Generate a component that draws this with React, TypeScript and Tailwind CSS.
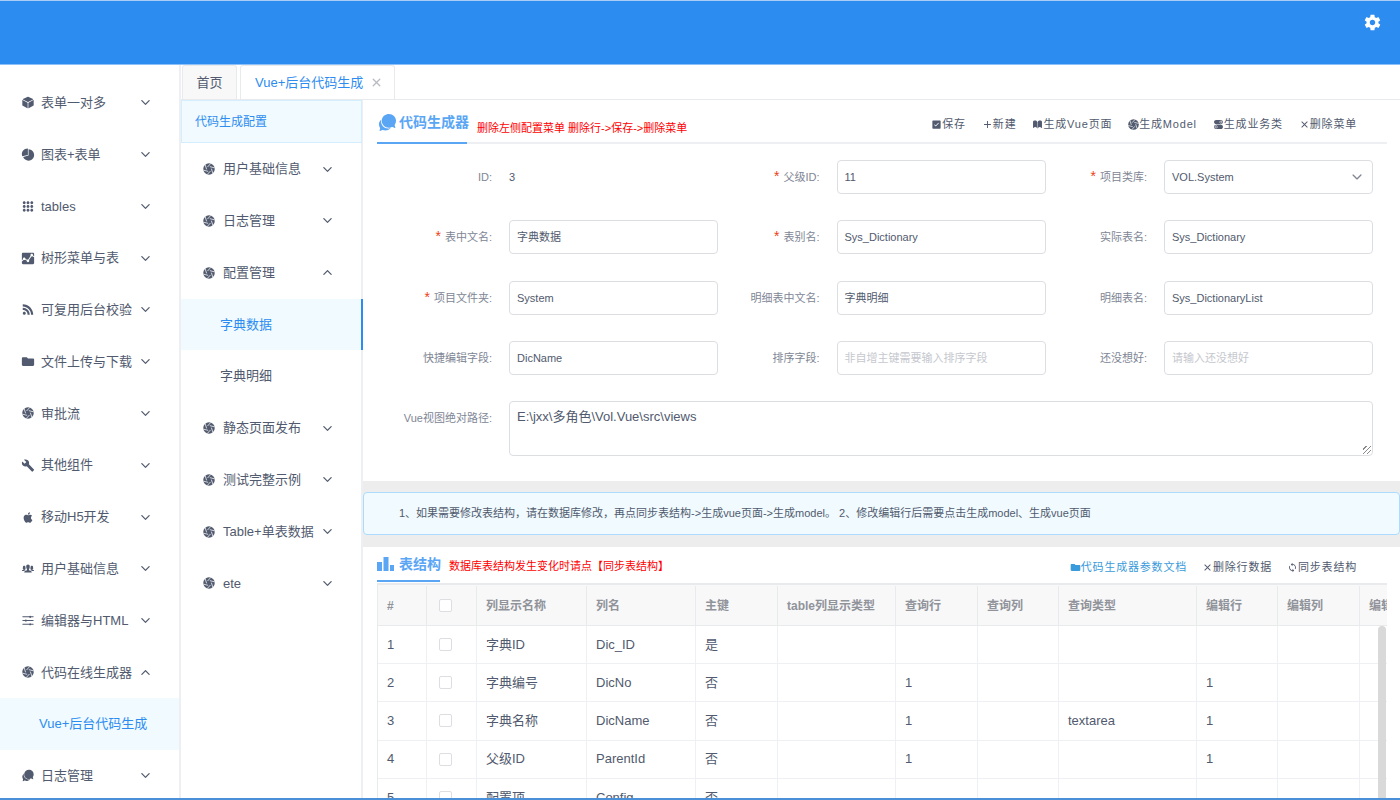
import React from "react";
import {
  IoIosCube, IoIosPie, IoIosKeypad, IoMdAnalytics, IoLogoRss, IoMdFolder, IoMdBuild, IoLogoApple,
  IoIosPeople, IoIosOptions, IoIosChatbubbles, IoIosArrowDown, IoIosArrowUp, IoMdSettings, IoIosCheckbox, IoMdAdd,
  IoIosBook, IoMdClose, IoIosClose, IoMdSync, IoIosSwitch,
} from "react-icons/io";

const ff = "font-['Liberation_Sans','Noto_Sans_CJK_SC',sans-serif]";

function Ball() {
  return (
    <svg viewBox="0 0 24 24" width="1em" height="1em">
      <circle cx="12" cy="12" r="11.5" fill="currentColor" />
      <g stroke="#ffffff" strokeWidth="1.5" fill="none" strokeLinecap="round">
        <path d="M9.5 7.5 L15 1.5" />
        <path d="M14.5 7.5 L22.5 9.5" />
        <path d="M17 12 L19.5 20" />
        <path d="M14.5 16.5 L9 22.5" />
        <path d="M9.5 16.5 L1.5 14.5" />
        <path d="M7 12 L4.5 4" />
      </g>
    </svg>
  );
}

function MenuRow({ icon, text, open }: { icon: React.ReactNode; text: string; open?: boolean }) {
  return (
    <div className="h-[51.77px] pl-[21px] pr-[27px] flex items-center text-[13px] text-[#515a6e]">
      <span className="w-[14px] h-[14px] mr-[6px] flex items-center justify-center text-[15px] shrink-0">{icon}</span>
      <span className="flex-1 whitespace-nowrap">{text}</span>
      <span className="text-[13px] shrink-0">{open ? <IoIosArrowUp /> : <IoIosArrowDown />}</span>
    </div>
  );
}

const leftMenu: [React.ReactNode, string][] = [
  [<IoIosCube />, "表单一对多"],
  [<IoIosPie />, "图表+表单"],
  [<IoIosKeypad />, "tables"],
  [<IoMdAnalytics />, "树形菜单与表"],
  [<IoLogoRss />, "可复用后台校验"],
  [<IoMdFolder />, "文件上传与下载"],
  [<span className="text-[12px] flex"><Ball /></span>, "审批流"],
  [<IoMdBuild />, "其他组件"],
  [<IoLogoApple />, "移动H5开发"],
  [<IoIosPeople />, "用户基础信息"],
  [<IoIosOptions />, "编辑器与HTML"],
];

function Sub2({ text, open }: { text: string; open?: boolean }) {
  return (
    <div className="h-[51.77px] pl-[21px] pr-[27px] flex items-center text-[13px] text-[#515a6e]">
      <span className="w-[14px] h-[14px] mr-[7px] flex items-center justify-center text-[12px] shrink-0"><Ball /></span>
      <span className="flex-1 whitespace-nowrap">{text}</span>
      <span className="text-[13px] shrink-0">{open ? <IoIosArrowUp /> : <IoIosArrowDown />}</span>
    </div>
  );
}

function Field({ label, req, children, w }: { label: string; req?: boolean; children: React.ReactNode; w: string }) {
  return (
    <div className={`flex items-center ${w}`}>
      <div className="flex-1 text-right text-[11px] text-[#808695] whitespace-nowrap pr-[17px]">
        {req && <span className="text-[#ed4014] text-[14px] leading-none mr-[4px]">*</span>}{label}:
      </div>
      {children}
    </div>
  );
}

function Input({ value, placeholder }: { value?: string; placeholder?: string }) {
  return (
    <div className={`w-[209px] h-[34px] border border-[#dcdee2] rounded-[4px] bg-white px-[7px] flex items-center text-[11px] ${value ? "text-[#515a6e]" : "text-[#c5c8ce]"}`}>
      {value || placeholder}
    </div>
  );
}

function Tool({ icon, text, cls = "text-[#515a6e]" }: { icon: React.ReactNode; text: string; cls?: string }) {
  return (
    <span className={`flex items-center text-[11px] tracking-[0.8px] whitespace-nowrap ${cls}`}>
      <span className="text-[11px] w-[11px] flex items-center justify-center">{icon}</span>{text}
    </span>
  );
}

const cols = ["w-[49px]", "w-[50px]", "w-[110px]", "w-[109px]", "w-[82px]", "w-[118px]", "w-[82px]", "w-[81px]", "w-[138px]", "w-[81px]", "w-[82px]", "w-[28px]"];
const heads = ["#", "", "列显示名称", "列名", "主键", "table列显示类型", "查询行", "查询列", "查询类型", "编辑行", "编辑列", "编辑"];
const rows = [
  ["1", "", "字典ID", "Dic_ID", "是", "", "", "", "", "", "", ""],
  ["2", "", "字典编号", "DicNo", "否", "", "1", "", "", "1", "", ""],
  ["3", "", "字典名称", "DicName", "否", "", "1", "", "textarea", "1", "", ""],
  ["4", "", "父级ID", "ParentId", "否", "", "1", "", "", "1", "", ""],
  ["5", "", "配置项", "Config", "否", "", "", "", "", "", "", ""],
];

function Check() {
  return <span className="w-[13px] h-[13px] border border-[#dcdee2] rounded-[2px] bg-white block" />;
}

function Bars() {
  return (
    <svg width="17" height="14" viewBox="0 0 17 14" className="mr-[5px] shrink-0" fill="currentColor">
      <rect x="0" y="5" width="5" height="9" />
      <rect x="6.5" y="0" width="5" height="14" />
      <rect x="13" y="8" width="4" height="6" />
    </svg>
  );
}

export default function App() {
  return (
    <div className={`w-[1400px] h-[800px] overflow-hidden bg-white flex flex-col relative ${ff}`}>
      <header className="h-[65px] shrink-0 bg-[#2d8cf0] flex justify-end pt-[12px] pr-[18px] text-white text-[19px] border-t border-t-[#a9cdf5] border-b border-b-[#8cc0f6]">
        <IoMdSettings />
      </header>
      <div className="flex flex-1 min-h-0">
        <aside className="w-[181px] shrink-0 border-r-2 border-r-[#eeeff2] pt-[12px] overflow-hidden">
          {leftMenu.map(([i, t]) => <MenuRow key={t} icon={i} text={t} />)}
          <MenuRow icon={<span className="text-[12px] flex"><Ball /></span>} text="代码在线生成器" open />
          <div className="h-[51.77px] bg-[#f0faff] border-r-2 border-r-[#2d8cf0] flex items-center pl-[39px] text-[13px] text-[#2d8cf0] -mr-[2px]">Vue+后台代码生成</div>
          <MenuRow icon={<IoIosChatbubbles />} text="日志管理" />
        </aside>
        <div className="flex-1 min-w-0 flex flex-col">
          <div className="h-[35px] shrink-0 flex items-end pt-[1px] pl-[1px] border-b border-b-[#e8eaec] gap-[3px]">
            <div className="w-[55px] h-[34px] bg-[#f8f8f9] border border-[#e8eaec] border-b-0 rounded-t-[3px] flex items-center justify-center text-[13px] text-[#515a6e]">首页</div>
            <div className="w-[155px] h-[34px] bg-white border border-[#e8eaec] border-b-0 rounded-t-[3px] flex items-center pl-[14px] text-[13px] text-[#2d8cf0] whitespace-nowrap">
              Vue+后台代码生成<IoIosClose className="ml-[3px] text-[21px] text-[#b8bbc2]" />
            </div>
          </div>
          <div className="flex flex-1 min-h-0">
            <nav className="w-[182px] shrink-0 border-r-2 border-r-[#eeeff2]">
              <div className="h-[43px] mb-[0.3px] -mr-[1px] bg-[#f0faff] border border-[#d5eeff] flex items-center pl-[13px] text-[12px] text-[#2d8cf0]">代码生成配置</div>
              <Sub2 text="用户基础信息" />
              <Sub2 text="日志管理" />
              <Sub2 text="配置管理" open />
              <div className="h-[51.77px] bg-[#f0faff] border-r-2 border-r-[#2d8cf0] -mr-[2px] flex items-center pl-[39px] text-[13px] text-[#2d8cf0]">字典数据</div>
              <div className="h-[51.77px] flex items-center pl-[39px] text-[13px] text-[#515a6e]">字典明细</div>
              <Sub2 text="静态页面发布" />
              <Sub2 text="测试完整示例" />
              <Sub2 text="Table+单表数据" />
              <Sub2 text="ete" />
            </nav>
            <main className="flex-1 min-w-0 flex flex-col overflow-hidden">
              <section className="h-[381px] shrink-0 px-[14px]">
                <div className="h-[44px] border-b-2 border-b-[#eeeff3] flex items-end w-[1010px] pr-[30px]">
                  <div className="h-[44px] -mb-[2px] w-[90px] border-b-2 border-b-[#5aa6f5] flex items-center text-[#5aa6f5] text-[14px] font-bold whitespace-nowrap pt-[3px]">
                    <IoIosChatbubbles className="text-[21px] mr-[1px] shrink-0" />代码生成器
                  </div>
                  <span className="text-[11px] text-[#ff0000] ml-[10px] h-[28px] flex items-center whitespace-nowrap flex-1">删除左侧配置菜单 删除行-&gt;保存-&gt;删除菜单</span>
                  <div className="flex items-center gap-[16px] h-[36px]">
                    <Tool icon={<IoIosCheckbox />} text="保存" />
                    <Tool icon={<IoMdAdd />} text="新建" />
                    <Tool icon={<IoIosBook />} text="生成Vue页面" />
                    <Tool icon={<Ball />} text="生成Model" />
                    <Tool icon={<IoIosSwitch />} text="生成业务类" />
                    <Tool icon={<IoMdClose />} text="删除菜单" />
                  </div>
                </div>
                <div className="grid grid-cols-[341px_327.5px_327.5px] pt-[16px] gap-y-[26.4px]">
                  <Field w="w-[341px]" label="ID"><div className="w-[209px] text-[11px] text-[#515a6e]">3</div></Field>
                  <Field w="w-[327.5px]" label="父级ID" req><Input value="11" /></Field>
                  <Field w="w-[327.5px]" label="项目类库" req>
                    <div className="w-[209px] h-[34px] border border-[#dcdee2] rounded-[4px] px-[7px] flex items-center justify-between text-[11px] text-[#515a6e]">VOL.System<IoIosArrowDown className="text-[14px] text-[#808695] mr-[1px]" /></div>
                  </Field>
                  <Field w="w-[341px]" label="表中文名" req><Input value="字典数据" /></Field>
                  <Field w="w-[327.5px]" label="表别名" req><Input value="Sys_Dictionary" /></Field>
                  <Field w="w-[327.5px]" label="实际表名"><Input value="Sys_Dictionary" /></Field>
                  <Field w="w-[341px]" label="项目文件夹" req><Input value="System" /></Field>
                  <Field w="w-[327.5px]" label="明细表中文名"><Input value="字典明细" /></Field>
                  <Field w="w-[327.5px]" label="明细表名"><Input value="Sys_DictionaryList" /></Field>
                  <Field w="w-[341px]" label="快捷编辑字段"><Input value="DicName" /></Field>
                  <Field w="w-[327.5px]" label="排序字段"><Input placeholder="非自增主键需要输入排序字段" /></Field>
                  <Field w="w-[327.5px]" label="还没想好"><Input placeholder="请输入还没想好" /></Field>
                </div>
                <div className="flex mt-[25.5px]">
                  <div className="w-[132px] text-right text-[11px] text-[#808695] pt-[9px] pr-[17px] whitespace-nowrap">Vue视图绝对路径:</div>
                  <div className="w-[864px] h-[55px] border border-[#dcdee2] rounded-[4px] px-[7px] pt-[5px] text-[13px] text-[#515a6e] relative">
                    E:\jxx\多角色\Vol.Vue\src\views
                    <span className="absolute right-[1px] bottom-[1px] w-[8px] h-[8px] bg-[repeating-linear-gradient(135deg,transparent_0,transparent_2px,#8a8a8a_2px,#8a8a8a_3px)]" />
                  </div>
                </div>
              </section>
              <div className="h-[66px] shrink-0 bg-[#ededed] pt-[11px] pb-[12px]">
                <div className="h-[43px] bg-[#f0faff] border border-[#abdcff] rounded-[4px] flex items-center pl-[35px] text-[11px] text-[#515a6e] whitespace-nowrap">
                  1、如果需要修改表结构，请在数据库修改，再点同步表结构-&gt;生成vue页面-&gt;生成model。 2、修改编辑行后需要点击生成model、生成vue页面
                </div>
              </div>
              <section className="flex-1 min-h-0 px-[14px] overflow-hidden">
                <div className="h-[35px] flex items-end w-[1010px] pr-[30px]">
                  <div className="h-[35px] w-[63px] border-b-2 border-b-[#5aa6f5] flex items-center text-[#5aa6f5] text-[14px] font-bold whitespace-nowrap pt-[1px]">
                    <Bars />表结构
                  </div>
                  <span className="text-[11px] text-[#ff0000] ml-[9px] h-[31px] flex items-center whitespace-nowrap flex-1">数据库表结构发生变化时请点【同步表结构】</span>
                  <div className="flex items-center gap-[15px] h-[30px]">
                    <Tool icon={<IoMdFolder />} text="代码生成器参数文档" cls="text-[#3a9bdc]" />
                    <Tool icon={<IoMdClose />} text="删除行数据" />
                    <Tool icon={<IoMdSync />} text="同步表结构" />
                  </div>
                </div>
                <div className="relative w-[1010px] mt-[1px] border-t-2 border-l border-[#e8eaec] overflow-hidden">
                  <div className="flex h-[41px] bg-[#f8f8f9] border-b border-b-[#e8eaec] pt-[1px]">
                    {heads.map((h, i) => (
                      <div key={i} className={`${cols[i]} shrink-0 border-r border-r-[#e8eaec] flex items-center px-[9px] text-[12px] font-bold text-[#909399] whitespace-nowrap overflow-hidden`}>
                        {i === 1 ? <span className="pl-[3px]"><Check /></span> : h}
                      </div>
                    ))}
                  </div>
                  {rows.map((r, ri) => (
                    <div key={ri} className="flex h-[38.2px] border-b border-b-[#eef0f3]">
                      {r.map((c, i) => (
                        <div key={i} className={`${cols[i]} shrink-0 border-r border-r-[#eef0f3] flex items-center px-[9px] text-[13px] text-[#515a6e] whitespace-nowrap overflow-hidden`}>
                          {i === 1 ? <span className="pl-[3px]"><Check /></span> : c}
                        </div>
                      ))}
                    </div>
                  ))}
                  <span className="absolute right-[1px] top-[41px] w-[8px] h-[200px] bg-[#d9d9d9] rounded-t-[4px]" />
                </div>
              </section>
            </main>
          </div>
        </div>
      </div>
      <div className="absolute left-0 right-0 bottom-0 h-[2px] bg-[#4a90d9]" />
    </div>
  );
}
